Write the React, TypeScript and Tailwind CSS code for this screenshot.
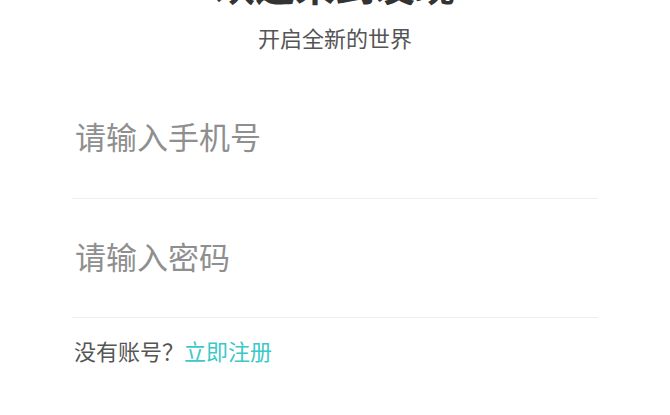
export default function App() {
  return (
    <div
      className="w-[670px] h-[415px] overflow-hidden bg-white px-[72px]"
      style={{ fontFamily: '"Noto Sans CJK SC", "Noto Sans", sans-serif' }}
    >
      <div className="mt-[-36px] h-[40px] text-center text-[40px] leading-[40px] font-bold text-[#333333]">
        欢迎来到发现
      </div>
      <div className="mt-[22px] h-[22px] text-center text-[22px] leading-[22px] text-[#555555]">
        开启全新的世界
      </div>
      <div className="mt-[32px] flex flex-col">
        <div className="flex h-[119px] items-center border-b border-[#eeeeee] pb-[6px]">
          <input
            className="w-full bg-transparent pl-[3px] text-[31px] text-[#333] outline-none placeholder:text-[#8f8f8f]"
            placeholder="请输入手机号"
          />
        </div>
        <div className="flex h-[119px] items-center border-b border-[#eeeeee] pb-[4px]">
          <input
            type="password"
            className="w-full bg-transparent pl-[3px] text-[31px] text-[#333] outline-none placeholder:text-[#8f8f8f]"
            placeholder="请输入密码"
          />
        </div>
      </div>
      <div className="mt-[21px] pl-[2px] text-[22px] leading-[22px] text-[#555555]">
        没有账号？<span className="text-[#3cc8c8]">立即注册</span>
      </div>
    </div>
  );
}
